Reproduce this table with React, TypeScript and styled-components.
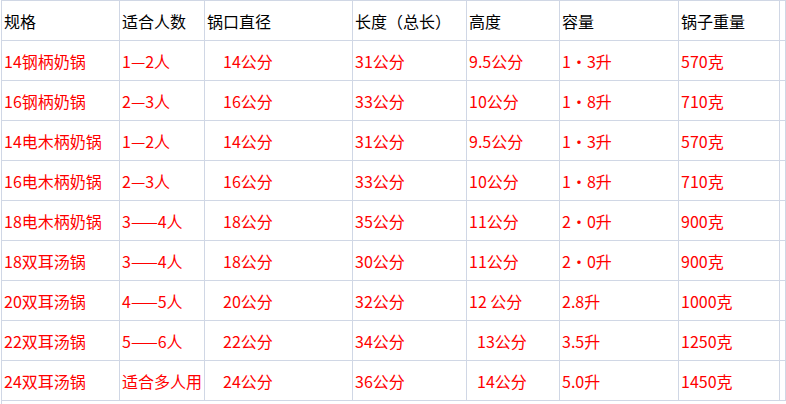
import React from "react";
import styled, { createGlobalStyle } from "styled-components";

const GlobalStyle = createGlobalStyle`
  html, body {
    margin: 0;
    padding: 0;
    background: #ffffff;
  }
  body {
    font-family: "Noto Sans CJK SC", "Noto Sans", sans-serif;
  }
`;

const GRID = "#d0d7e5";

const widths = [118, 85, 148, 114, 93, 119, 101];

const Sheet = styled.div`
  margin-left: 1px;
  width: 785px;
  height: 404px;
  overflow: hidden;
  border-left: 1px solid ${GRID};
  border-top: 1px solid ${GRID};
  box-sizing: border-box;
`;

const Row = styled.div`
  display: grid;
  grid-template-columns: ${widths.map((w) => w + "px").join(" ")} 1fr;
  height: 40px;
`;

const Cell = styled.div<{ $header?: boolean; $indent?: number }>`
  box-sizing: border-box;
  height: 40px;
  border-right: 1px solid ${GRID};
  border-bottom: 1px solid ${GRID};
  padding-left: ${(p) => 2 + (p.$indent || 0)}px;
  display: flex;
  align-items: center;
  white-space: pre;
  overflow: hidden;
  font-size: 16px;
  line-height: 18px;
  color: ${(p) => (p.$header ? "#000000" : "#ff0000")};
`;

const header = ["规格", "适合人数", "锅口直径", "长度（总长）", "高度", "容量", "锅子重量"];

// a plain string, or [text, extra left indent in px]
type Item = string | [string, number];

const rows: Item[][] = [
  ["14钢柄奶锅", "1—2人", ["14公分", 16], "31公分", "9.5公分", "1・3升", "570克"],
  ["16钢柄奶锅", "2—3人", ["16公分", 16], "33公分", "10公分", "1・8升", "710克"],
  ["14电木柄奶锅", "1—2人", ["14公分", 16], "31公分", "9.5公分", "1・3升", "570克"],
  ["16电木柄奶锅", "2—3人", ["16公分", 16], "33公分", "10公分", "1・8升", "710克"],
  ["18电木柄奶锅", "3——4人", ["18公分", 16], "35公分", "11公分", "2・0升", "900克"],
  ["18双耳汤锅", "3——4人", ["18公分", 16], "30公分", "11公分", "2・0升", "900克"],
  ["20双耳汤锅", "4——5人", ["20公分", 16], "32公分", "12 公分", "2.8升", "1000克"],
  ["22双耳汤锅", "5——6人", ["22公分", 16], "34公分", ["13公分", 8], "3.5升", "1250克"],
  ["24双耳汤锅", "适合多人用", ["24公分", 16], "36公分", ["14公分", 8], "5.0升", "1450克"],
];

export default function App() {
  return (
    <>
      <GlobalStyle />
      <Sheet>
        <Row>
          {header.map((h, i) => (
            <Cell key={i} $header>
              {h}
            </Cell>
          ))}
          <Cell $header />
        </Row>
        {rows.map((r, ri) => (
          <Row key={ri}>
            {r.map((item, ci) => {
              const [text, indent] = typeof item === "string" ? [item, 0] : item;
              return (
                <Cell key={ci} $indent={indent}>
                  {text}
                </Cell>
              );
            })}
            <Cell />
          </Row>
        ))}
      </Sheet>
    </>
  );
}
